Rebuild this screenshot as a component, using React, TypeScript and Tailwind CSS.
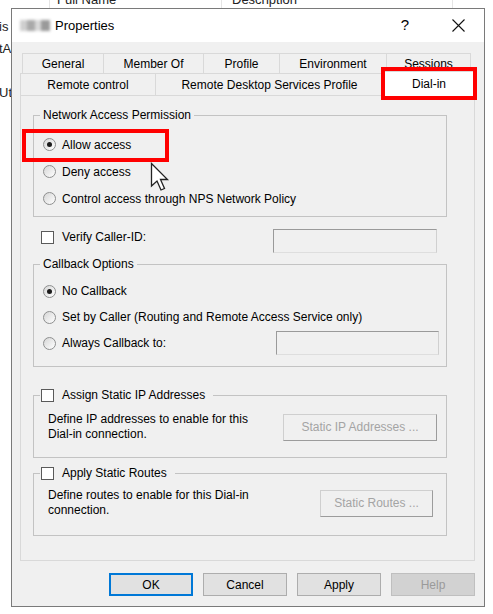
import type { ReactNode } from "react";

const topTabs = [
  { label: "General", w: "w-[81px]" },
  { label: "Member Of", w: "w-[100px]" },
  { label: "Profile", w: "w-[76px]" },
  { label: "Environment", w: "w-[107px]" },
  { label: "Sessions", w: "w-[85px]" },
];

function Radio({ checked }: { checked?: boolean }) {
  return (
    <span className="mr-[6px] flex h-[13px] w-[13px] shrink-0 items-center justify-center rounded-full border border-[#8e8f8f] bg-gradient-to-br from-[#d6d6d6] to-white">
      {checked && <span className="h-[5px] w-[5px] rounded-full bg-[#1b1b1b]" />}
    </span>
  );
}

function Check() {
  return <span className="h-[13px] w-[13px] shrink-0 border border-[#5a5a5a] bg-white" />;
}

function Group({ legend, children, className }: { legend: ReactNode; children: ReactNode; className: string }) {
  return (
    <fieldset className={`w-[414px] border border-[#c3c3c3] px-0 ${className}`}>
      <legend className="ml-[6px] px-[3px] leading-[14px]">{legend}</legend>
      {children}
    </fieldset>
  );
}

function TextBox({ className }: { className: string }) {
  return (
    <div
      className={`h-[24px] border border-[#9a9a9a] border-b-[#dedede] border-r-[#d0d0d0] bg-[#f0f0f0] ${className}`}
    />
  );
}

function OldButton({ label, className }: { label: string; className: string }) {
  return (
    <div
      className={`flex h-[27px] items-center justify-center border border-[#cfcfcf] border-b-[#9c9c9c] border-r-[#9c9c9c] bg-[#f0f0f0] text-[#a4a4a4] ${className}`}
    >
      {label}
    </div>
  );
}

export default function App() {
  return (
    <div className="relative h-[614px] w-[493px] overflow-hidden bg-white font-['Liberation_Sans',Arial,sans-serif] text-[12px] text-black">
      {/* list behind the dialog */}
      <div className="-mt-[9px] flex h-[18px] text-[13px] leading-[18px] text-[#222]">
        <div className="w-[50px] border-r border-[#e5e5e5]" />
        <div className="w-[172px] border-r border-[#e5e5e5] pl-[7px]">Full Name</div>
        <div className="w-[231px] border-r border-[#e5e5e5] pl-[10px]">Description</div>
      </div>
      <div className="mt-[7px] text-[13px] leading-[22px] text-[#222]">
        <div className="-ml-[1px]">is</div>
        <div className="-ml-[1px]">tA</div>
        <div className="h-[22px]" />
        <div className="-ml-[1px]">Ut</div>
      </div>

      {/* dialog window */}
      <div className="absolute left-[11px] top-[8px] flex h-[599px] w-[474px] flex-col border border-[#7a7a7a] bg-[#f0f0f0]">
        <div className="flex h-[33px] items-center bg-white pl-[8px]">
          <div className="flex h-[11px] w-[30px] blur-[1.5px]">
            <span className="w-[7px] bg-[#cfcfcf]" />
            <span className="w-[8px] bg-[#a9a9a9]" />
            <span className="w-[6px] bg-[#d9d9d9]" />
            <span className="w-[9px] bg-[#9a9a9a]" />
          </div>
          <span className="ml-[5px] text-[13px]">Properties</span>
          <span className="ml-auto w-[14px] text-center text-[15px]">?</span>
          <svg className="ml-[40px] mr-[19px]" width="13" height="13" viewBox="0 0 13 13">
            <path d="M0.5 0.5L12.5 12.5M12.5 0.5L0.5 12.5" stroke="#111" strokeWidth="1.1" fill="none" />
          </svg>
        </div>

        <div className="flex-1 px-[8px] pt-[11px]">
          <div className="ml-[2px] flex h-[20px]">
            {topTabs.map((t, i) => (
              <div
                key={t.label}
                className={`flex items-center justify-center border-l border-t border-[#d9d9d9] ${t.w} ${
                  i === topTabs.length - 1 ? "border-r" : ""
                }`}
              >
                {t.label}
              </div>
            ))}
          </div>
          <div className="flex h-[22px] items-end">
            <div className="flex h-[22px] w-[135px] items-center justify-center border-l border-t border-[#d9d9d9]">
              Remote control
            </div>
            <div className="flex h-[22px] w-[228px] items-center justify-center border-l border-t border-[#d9d9d9]">
              Remote Desktop Services Profile
            </div>
            <div className="relative z-10 -mb-px flex h-[25px] w-[92px] items-center justify-center border-l border-r border-t border-[#d9d9d9] bg-white">
              Dial-in
            </div>
          </div>

          <div className="h-[466px] w-[455px] border border-[#d9d9d9] px-[12px] pt-[12px]">
            <Group legend="Network Access Permission" className="pb-[4px] pt-[9px]">
              <div className="pl-[9px]">
                <div className="flex h-[27px] items-center">
                  <Radio checked />
                  Allow access
                </div>
                <div className="flex h-[27px] items-center">
                  <Radio />
                  Deny access
                </div>
                <div className="flex h-[27px] items-center">
                  <Radio />
                  Control access through NPS Network Policy
                </div>
              </div>
            </Group>

            <div className="mt-[12px] flex h-[24px] w-[414px] items-start pl-[8px]">
              <div className="mt-[1px] flex h-[14px] items-center">
                <Check />
                <span className="ml-[8px]">Verify Caller-ID:</span>
              </div>
              <TextBox className="ml-auto mr-[10px] w-[164px]" />
            </div>

            <Group legend="Callback Options" className="mt-[4px] pb-[10px] pt-[7px]">
              <div className="pl-[9px]">
                <div className="flex h-[26px] items-center">
                  <Radio checked />
                  No Callback
                </div>
                <div className="flex h-[26px] items-center">
                  <Radio />
                  Set by Caller (Routing and Remote Access Service only)
                </div>
                <div className="flex h-[26px] items-center">
                  <Radio />
                  Always Callback to:
                  <TextBox className="ml-auto mr-[7px] w-[163px]" />
                </div>
              </div>
            </Group>

            <fieldset className="mt-[21px] w-[414px] border border-[#c3c3c3] px-0 pb-[16px] pt-[11px]">
              <legend className="ml-[6px] flex h-[14px] items-center pl-[1px] pr-[8px]">
                <Check />
                <span className="ml-[8px]">Assign Static IP Addresses</span>
              </legend>
              <div className="flex h-[28px] items-center pl-[14px]">
                <div className="leading-[15px]">
                  Define IP addresses to enable for this
                  <br />
                  Dial-in connection.
                </div>
                <OldButton label="Static IP Addresses ..." className="ml-auto mr-[9px] w-[154px]" />
              </div>
            </fieldset>

            <fieldset className="mt-[8px] w-[414px] border border-[#c3c3c3] px-0 pb-[18px] pt-[9px]">
              <legend className="ml-[6px] flex h-[14px] items-center pl-[1px] pr-[8px]">
                <Check />
                <span className="ml-[8px]">Apply Static Routes</span>
              </legend>
              <div className="flex h-[28px] items-center pl-[14px]">
                <div className="leading-[15px]">
                  Define routes to enable for this Dial-in
                  <br />
                  connection.
                </div>
                <OldButton label="Static Routes ..." className="ml-auto mr-[13px] w-[113px]" />
              </div>
            </fieldset>
          </div>

          <div className="mr-[1px] mt-[12px] flex justify-end gap-[10px]">
            <div className="flex h-[23px] w-[84px] items-center justify-center border-2 border-[#0078d7] bg-[#e1e1e1]">
              OK
            </div>
            <div className="flex h-[23px] w-[84px] items-center justify-center border border-[#adadad] bg-[#e1e1e1]">
              Cancel
            </div>
            <div className="flex h-[23px] w-[84px] items-center justify-center border border-[#adadad] bg-[#e1e1e1]">
              Apply
            </div>
            <div className="flex h-[23px] w-[84px] items-center justify-center border border-[#bfbfbf] bg-[#d2d2d2] text-[#9a9a9a]">
              Help
            </div>
          </div>
        </div>
      </div>

      {/* annotation boxes */}
      <div className="absolute left-[381px] top-[67px] z-20 h-[33px] w-[96px] border-[4px] border-[#ff0000]" />
      <div className="absolute left-[22px] top-[129px] z-20 h-[33px] w-[147px] border-[4px] border-[#ff0000]" />

      {/* mouse pointer */}
      <svg className="absolute left-[150px] top-[162px] z-20" width="20" height="30" viewBox="0 0 20 30">
        <path
          d="M1.5 1.5 L1.5 24 L7 19 L11 28 L14.5 26.5 L10.5 17.5 L17.5 17.5 Z"
          fill="#fff"
          stroke="#222"
          strokeWidth="1.3"
          strokeLinejoin="miter"
        />
      </svg>
    </div>
  );
}
